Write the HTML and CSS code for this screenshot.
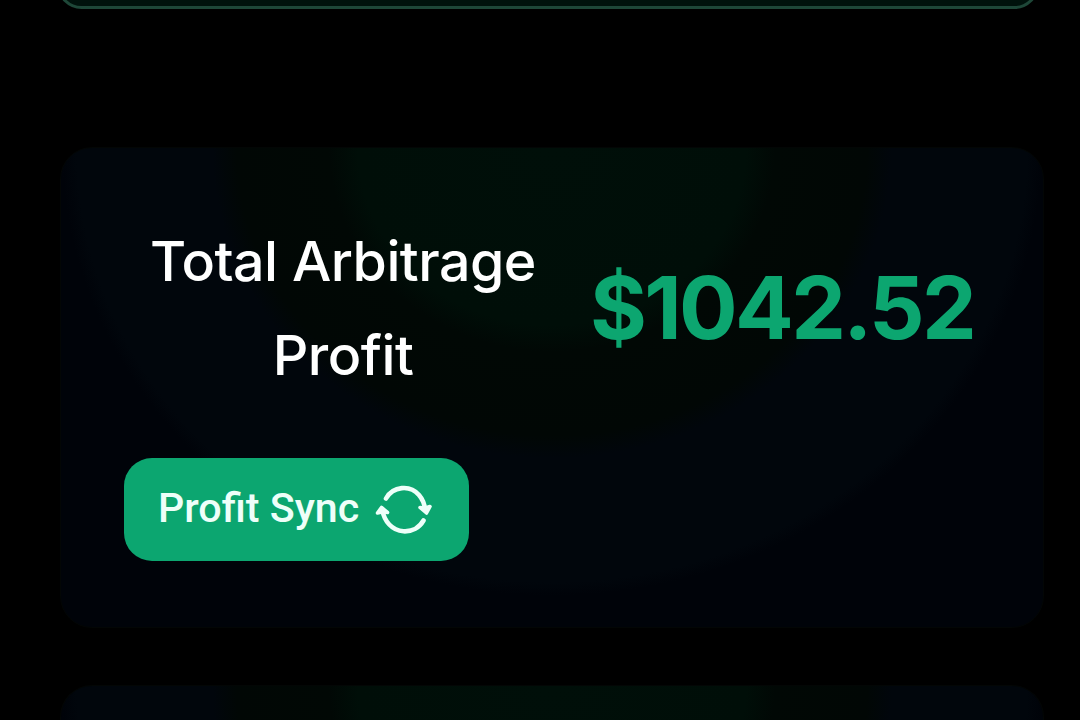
FILE: index.html
```
<!DOCTYPE html>
<html lang="en">
<head>
<meta charset="UTF-8">
<meta name="viewport" content="width=device-width, initial-scale=1.0">
<title>Arbitrage</title>
<link rel="stylesheet" href="styles.css">
</head>
<body>
<div class="panel"></div>
<div class="card">
    <div class="card-row">
        <h2 class="card-title">Total Arbitrage Profit</h2>
        <div class="amount">$1042.52</div>
    </div>
    <button class="sync-btn" type="button">
        <span>Profit Sync</span>
        <svg class="sync-icon" width="60" height="54" viewBox="0 0 60 54" fill="none" stroke="currentColor" stroke-width="4.6" stroke-linecap="round" stroke-linejoin="round">
            <path d="M12 15.5C19 3 36 1.500 45 12C48.500 16 50.500 21 51.200 27"/>
            <path d="M8.500 27C10 38 18 47.500 29.500 48.300C38 48.800 45.500 44.500 49.500 37.500"/>
            <path fill="currentColor" stroke-width="3.600" d="M46 24.500L52.500 30L56 23.500L51.500 25Z"/>
            <path fill="currentColor" stroke-width="3.600" d="M3.500 30L7.500 24.500L13.500 29.500L8.800 28.800Z"/>
        </svg>
    </button>
</div>
<div class="card card-next"></div>
</body>
</html>
```
FILE: styles.css
```
* {
    box-sizing: border-box;
}
body {
    margin: 0;
    height: 720px;
    overflow: hidden;
    background-color: #000;
    color: #fff;
    font-family: Inter, sans-serif;
}
.panel {
    height: 49px;
    margin: -40px 41px 138px 57px;
    border: 3px solid #1e4738;
    border-radius: 42px;
    background-color: #00120c;
}
.card {
    height: 481px;
    margin: 0 36px 57px 60px;
    padding: 66px 60px 0 63px;
    border: 1px solid #030605;
    border-radius: 32px;
    background: radial-gradient(485px 443px at 50% 0, #000f09 0, #000e08 40%, #010805 46%, #010705 65%, #01060c 70%, #01060c 98%, #000309 101%);
}
.card-next {
    height: 35px;
    margin-bottom: 0;
    border-bottom: 0;
    border-radius: 32px 32px 0 0;
}
.card-row {
    display: flex;
    align-items: center;
}
.card-title {
    flex: none;
    width: 438px;
    margin: 0;
    font-size: 55.5px;
    font-weight: 500;
    line-height: 94px;
    letter-spacing: -0.5px;
    text-align: center;
}
.amount {
    margin-left: 28px;
    padding-bottom: 1px;
    color: #0ca670;
    font-size: 87px;
    font-weight: 700;
    letter-spacing: -2.7px;
    white-space: nowrap;
}
.sync-btn {
    display: flex;
    align-items: center;
    gap: 15px;
    width: 345px;
    height: 103px;
    margin-top: 56px;
    padding: 0 34px;
    border: 0;
    border-radius: 28px;
    background-color: #0ca670;
    color: #eefff9;
    font-family: Roboto, sans-serif;
    font-size: 41.2px;
    font-weight: 500;
    white-space: nowrap;
}
.sync-btn span {
    padding-bottom: 3px;
}
.sync-icon {
    flex: none;
}
```
